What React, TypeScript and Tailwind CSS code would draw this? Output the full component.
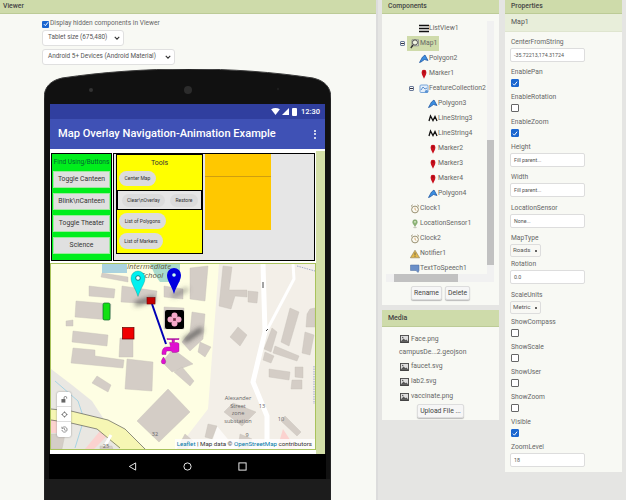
import type { ReactNode } from 'react'

type IconName = 'list' | 'map' | 'polygon' | 'marker' | 'feature' | 'line' | 'clock' | 'location' | 'notifier' | 'speech'

type TreeItem = { label: string; icon: IconName; depth: number; toggle?: boolean; selected?: boolean }

const tree: TreeItem[] = [
  { label: 'ListView1', icon: 'list', depth: 1 },
  { label: 'Map1', icon: 'map', depth: 0, toggle: true, selected: true },
  { label: 'Polygon2', icon: 'polygon', depth: 1 },
  { label: 'Marker1', icon: 'marker', depth: 1 },
  { label: 'FeatureCollection2', icon: 'feature', depth: 1, toggle: true },
  { label: 'Polygon3', icon: 'polygon', depth: 2 },
  { label: 'LineString3', icon: 'line', depth: 2 },
  { label: 'LineString4', icon: 'line', depth: 2 },
  { label: 'Marker2', icon: 'marker', depth: 2 },
  { label: 'Marker3', icon: 'marker', depth: 2 },
  { label: 'Marker4', icon: 'marker', depth: 2 },
  { label: 'Polygon4', icon: 'polygon', depth: 2 },
  { label: 'Clock1', icon: 'clock', depth: 0 },
  { label: 'LocationSensor1', icon: 'location', depth: 0 },
  { label: 'Clock2', icon: 'clock', depth: 0 },
  { label: 'Notifier1', icon: 'notifier', depth: 0 },
  { label: 'TextToSpeech1', icon: 'speech', depth: 0 },
]

const depthPad: Record<number, string> = { 0: 'pl-[28px]', 1: 'pl-[37px]', 2: 'pl-[46px]' }

const buildings = [
  '102,274 128,278 128,283 101,278', '89,287 115,290 114,299 89,297', '122,287 157,292 155,305 121,303',
  '76,302 111,305 110,321 75,318', '66,322 73,321 73,327 66,327', '73,332 108,336 107,347 72,343',
  '73,349 95,351 95,357 124,361 123,369 71,364', '120,339 133,339 133,358 119,358', '127,360 153,363 152,392 125,390',
  '97,377 111,386 108,393 92,384', '168,390 190,413 159,443 137,422', '190,269 208,267 205,302 190,300',
  '164,287 183,290 183,300 164,298', '173,350 193,365 172,373 162,363', '182,368 194,382 190,387 174,373',
  '200,343 211,348 205,358 198,353', '192,313 205,315 203,340 190,352 182,343 190,333', '164,308 184,309 184,330 164,330',
  '223,267 232,268 229,291 247,291 247,298 235,297 231,310 219,307', '248,292 258,293 257,304 248,303',
  '238,328 247,336 240,347 230,338', '290,309 299,313 289,347 281,343', '272,329 277,333 271,353 264,350',
  '305,333 314,336 310,356 302,354', '275,347 299,357 297,362 273,354', '265,353 274,357 271,364 263,361',
  '269,370 290,373 289,381 269,378', '295,368 303,368 303,379 295,378', '292,381 302,381 302,390 291,390',
  '310,310 315,309 315,328 306,328 307,315', '233,404 256,413 242,427 224,413', '285,417 301,433 297,437 281,422',
  '208,425 217,427 212,440 205,438', '185,435 193,442 187,450 177,450', '240,435 252,440 248,450 238,450',
  '51,435 65,435 62,450 51,450', '100,447 112,447 113,450 100,450',
]

function TreeIcon({ name }: { name: IconName }) {
  if (name === 'list') {
    return (
      <svg viewBox="0 0 10 10" className="w-[10px] h-[10px]">
        <path d="M0 1.500h10M0 4.500h10M0 7.500h10" stroke="#111" strokeWidth="1.500" />
      </svg>
    )
  }
  if (name === 'map') {
    return (
      <svg viewBox="0 0 10 10" className="w-[10px] h-[10px]">
        <path d="M2 .8l6.500 0 0 6-6.500 0z" fill="#e8eedc" stroke="#667" strokeWidth=".6" />
        <circle cx="5" cy="3.500" r="2.600" fill="#eef3df" stroke="#444" strokeWidth=".9" />
        <path d="M3 6L.8 9" stroke="#333" strokeWidth="1.300" />
      </svg>
    )
  }
  if (name === 'polygon') {
    return (
      <svg viewBox="0 0 10 10" className="w-[10px] h-[10px]">
        <path d="M.5 8.500L3.500 3 6 1 9 6.500 5.500 5.500 2 8z" fill="#3c8fe0" stroke="#1a4f9c" strokeWidth=".7" />
      </svg>
    )
  }
  if (name === 'marker') {
    return (
      <svg viewBox="0 0 10 10" className="w-[10px] h-[10px]">
        <path d="M5 9.800C4 7 2.600 5.600 2.600 3.200a2.400 2.400 0 0 1 4.800 0C7.400 5.600 6 7 5 9.800z" fill="#c8101c" />
        <circle cx="5" cy="3" r=".7" fill="#7a0a10" />
      </svg>
    )
  }
  if (name === 'feature') {
    return (
      <svg viewBox="0 0 10 10" className="w-[10px] h-[10px]">
        <rect x="1" y="1" width="8" height="7.500" rx="1" fill="#e3eefa" stroke="#5a93d2" strokeWidth=".8" />
        <path d="M2 6L4 3l2 2 2-1" fill="none" stroke="#3c78c0" strokeWidth=".8" />
        <circle cx="7.500" cy="7.500" r="1.600" fill="#5a93d2" />
      </svg>
    )
  }
  if (name === 'line') {
    return (
      <svg viewBox="0 0 10 10" className="w-[10px] h-[10px]">
        <path d="M1 7L2.500 2 5 6.500 7 2.500 9 7" fill="none" stroke="#111" strokeWidth="1.300" />
      </svg>
    )
  }
  if (name === 'clock') {
    return (
      <svg viewBox="0 0 10 10" className="w-[10px] h-[10px]">
        <circle cx="5" cy="5.500" r="3.400" fill="#fbfbf4" stroke="#8f8462" strokeWidth=".9" />
        <path d="M5 3.700v2l1.300.6" fill="none" stroke="#c87f2a" strokeWidth=".6" />
        <path d="M1 2.400L2.600.9M9 2.400L7.400.9" stroke="#8f8462" strokeWidth="1" />
      </svg>
    )
  }
  if (name === 'location') {
    return (
      <svg viewBox="0 0 10 10" className="w-[10px] h-[10px]">
        <path d="M5 7.500C4.200 5.500 2.700 4.800 2.700 3a2.300 2.300 0 0 1 4.600 0C7.300 4.800 5.800 5.500 5 7.500z" fill="#8fb878" stroke="#6b8f5a" strokeWidth=".5" />
        <circle cx="5" cy="2.900" r=".8" fill="#e8f0de" />
        <ellipse cx="5" cy="8.600" rx="2" ry=".7" fill="#c4c4b8" />
      </svg>
    )
  }
  if (name === 'notifier') {
    return (
      <svg viewBox="0 0 10 10" className="w-[10px] h-[10px]">
        <path d="M5 1.200L9.600 8.800H.4z" fill="#e2b84c" stroke="#8a7a55" strokeWidth=".6" />
        <path d="M5 3.600v2.800M5 7v.8" stroke="#554" strokeWidth=".8" />
      </svg>
    )
  }
  return (
    <svg viewBox="0 0 10 10" className="w-[10px] h-[10px]">
      <path d="M.5 1h8.500v5.500H9L8 8.500 6 6.500H.5z" fill="#6a8fc8" stroke="#4a6a9c" strokeWidth=".5" />
    </svg>
  )
}

function ImageIcon() {
  return (
    <svg viewBox="0 0 10 9" className="w-[9px] h-[8px] shrink-0">
      <rect width="10" height="9" fill="#444" />
      <rect x="1" y="1" width="8" height="6" fill="#ddd" />
      <path d="M1 7l3-3 2 2 1-1 2 2z" fill="#555" />
      <circle cx="3" cy="2.800" r=".8" fill="#555" />
    </svg>
  )
}

function PanelHeader({ children }: { children: ReactNode }) {
  return (
    <div className="h-[14px] bg-[#cedbaa] border-b border-[#bccb96] pl-[6px] text-[6.8px] leading-[12px] font-medium text-[#444]">
      {children}
    </div>
  )
}

function Label({ children }: { children: ReactNode }) {
  return <div className="text-[6.7px] leading-[9px] text-[#666]">{children}</div>
}

function TextBox({ value, mb }: { value: string; mb: string }) {
  return (
    <div className={`w-[75px] h-[14px] -ml-px mt-[1px] bg-white border border-[#ddd] rounded-[2px] pl-[3px] text-[5.3px] leading-[12px] text-[#555] ${mb}`}>
      {value}
    </div>
  )
}

function Check({ on }: { on?: boolean }) {
  return (
    <div className={`w-[8px] h-[8px] mt-[2px] mb-[6px] rounded-[1px] flex items-center justify-center border ${on ? 'bg-[#1a66d0] border-[#1a66d0]' : 'bg-white border-[#666]'}`}>
      {on && (
        <svg viewBox="0 0 8 8" className="w-[7px] h-[7px]">
          <path d="M1.200 4.200l2 2L6.800 1.600" fill="none" stroke="#fff" strokeWidth="1.300" />
        </svg>
      )}
    </div>
  )
}

function SelectBox({ value, mb }: { value: string; mb: string }) {
  return (
    <div className={`w-[31px] h-[13px] -ml-px mt-[1px] bg-[#f8f8f4] border border-[#ddd] rounded-[2px] pl-[2px] pr-[3px] flex items-center justify-between text-[6.2px] text-[#555] ${mb}`}>
      {value}
      <span className="w-[2px] h-[2px] bg-[#333] rounded-full" />
    </div>
  )
}

function GreenButton({ children }: { children: ReactNode }) {
  return (
    <div className="h-[17px] mb-[5px] bg-[#e0e0e0] border border-[#9dea9d] text-[6.8px] leading-[15px] text-center text-[#333]">
      {children}
    </div>
  )
}

function Oval({ children, className }: { children: ReactNode; className: string }) {
  return (
    <div className={`rounded-full bg-[#dcdcdc] text-[5px] text-center text-[#333] ${className}`}>{children}</div>
  )
}

function ChevronMark() {
  return (
    <svg viewBox="0 0 8 8" className="w-[6px] h-[6px]">
      <path d="M1 2.500l3 3 3-3" fill="none" stroke="#333" strokeWidth="1.500" />
    </svg>
  )
}

function MapArt() {
  return (
    <svg viewBox="51 265 264 185" className="w-[264px] h-[185px] block">
      <defs>
        <filter id="soft" x="-50%" y="-50%" width="200%" height="200%">
          <feGaussianBlur stdDeviation="2.600" />
        </filter>
      </defs>
      <rect x="51" y="265" width="264" height="185" fill="#fefee3" />
      <path d="M219 265H315V450H177L208 410Z" fill="#f3efe8" />
      <path d="M51 370L72 386 92 402 105 422 146 450H51Z" fill="#e9e7e2" />
      <path d="M51 421h6v13h-6z" fill="#fbd2cf" />
      <path d="M85 450L100 432 108 436 94 450Z" fill="#fbd2cf" />
      <path d="M55 382L78 402 84 420 75 449" fill="none" stroke="#a8d4e4" strokeWidth="1" />
      <path d="M51 410L71 412 108 421 125 430 145 450H120L97 430 71 424 51 421Z" fill="#f6f6b4" />
      <path d="M51 410L71 412 108 421 125 430 145 450M51 421L71 424 97 430 120 449" fill="none" stroke="#444" strokeWidth=".6" />
      <path d="M103 450L111 436" stroke="#fff" strokeWidth="3" />
      <rect x="102" y="265" width="25" height="9" fill="#aad3df" />
      <path d="M150 265H180V283H160L155 276Z" fill="#a9dbcc" />
      <path d="M217 427L236 450H210Z" fill="#fff" opacity=".7" />
      <path d="M277 450L283 430 296 450Z" fill="#fbd2cf" />
      {buildings.map((points) => (
        <polygon key={points} points={points} fill="#d4cdc6" stroke="#c6bfb8" strokeWidth=".4" />
      ))}
      <path d="M263 265L265 333 253 383 267 417 267 450" fill="none" stroke="#fff" strokeWidth="5" />
      <path d="M293 265L294 280 266 333" fill="none" stroke="#fff" strokeWidth="3" />
      <path d="M297 267L315 272" fill="none" stroke="#7a88c0" strokeWidth=".7" strokeDasharray="1.500 1" />
      <path d="M314 367V405" fill="none" stroke="#7a88c0" strokeWidth=".7" strokeDasharray="1.500 1" />
      <path d="M263 283v6M266 332l2-2" stroke="#333" strokeWidth=".9" />
      <g filter="url(#soft)">
        <path d="M135 305L155 299" stroke="#555" strokeWidth="5" opacity=".75" />
        <path d="M172 297L188 290" stroke="#555" strokeWidth="4" opacity=".55" />
        <path d="M184 342L202 330" stroke="#444" strokeWidth="5" opacity=".8" />
      </g>
      <g fontFamily="'Open Sans', sans-serif" fill="#5f5940">
        <text x="149" y="269.500" textAnchor="middle" fontSize="7.800" fontStyle="italic">Intermediate</text>
        <text x="152" y="279" textAnchor="middle" fontSize="7.800" fontStyle="italic">School</text>
        <g fontSize="5.600" fill="#666" textAnchor="middle">
          <text x="238" y="401">Alexander</text>
          <text x="238" y="408.500">Street</text>
          <text x="238" y="416">zone</text>
          <text x="238" y="423.500">substation</text>
          <text x="262" y="409">13</text>
          <text x="281" y="422">10</text>
          <text x="155" y="437">32</text>
          <text x="106" y="449">25</text>
          <text x="247" y="438">9</text>
        </g>
      </g>
      <path d="M152 305L166 345" stroke="#0000b4" strokeWidth="2" />
      <rect x="147" y="298.500" width="8" height="6.500" fill="#c40000" stroke="#700" strokeWidth=".6" />
      <path d="M138 297.500C135 288 131 285 131 279a7 7 0 0 1 14 0C145 285 141 288 138 297.500Z" fill="#00f0f0" stroke="#076" strokeWidth=".3" />
      <circle cx="138" cy="279" r="2.300" fill="#fff" stroke="#066" strokeWidth=".8" />
      <path d="M174 295C171 285 167 282 167 276a7 7 0 0 1 14 0C181 282 177 285 174 295Z" fill="#0000e0" />
      <circle cx="174" cy="276" r="1.800" fill="#cfe" />
      <rect x="165" y="311" width="19" height="19" rx="2" fill="#000" />
      <g fill="#f4a8c8">
        <circle cx="174.500" cy="316.500" r="3" />
        <circle cx="174.500" cy="324.500" r="3" />
        <circle cx="170.500" cy="320.500" r="3" />
        <circle cx="178.500" cy="320.500" r="3" />
      </g>
      <path d="M173 320.500h3M174.500 319v3" stroke="#a35" strokeWidth=".5" />
      <rect x="103" y="304" width="7" height="17" rx="1.500" fill="#12e012" stroke="#0a6a2a" strokeWidth=".7" />
      <rect x="122.500" y="328.500" width="11.500" height="11.500" fill="#f00000" stroke="#600" strokeWidth=".7" />
      <g fill="#e010d0" stroke="#80107a" strokeWidth=".35">
        <rect x="167" y="339.500" width="12" height="1.300" />
        <rect x="172" y="340.500" width="2.500" height="3" />
        <path d="M169.500 343.500h7.500l2 1v8l-3 1h-3.500l-1-1.500h-4c-1.200 0-1.500 1-1.500 3.500h-4c-.3-4 1-7.500 5-7.500h3.500z" />
        <path d="M163.500 358c-1.500 2.500-2.200 3.500-2.200 4.700a2.200 2.200 0 0 0 4.400 0c0-1.200-.7-2.200-2.200-4.700z" />
      </g>
    </svg>
  )
}

export default function App() {
  return (
    <div className="w-[626px] h-[500px] overflow-hidden flex bg-[#e5e5e3] font-['Roboto',sans-serif]">
      <div className="w-[378px] h-[500px] shrink-0 bg-[#f8f9f4] border-r-2 border-[#dcdcdc]">
        <PanelHeader>
          <span className="-ml-[3px]">Viewer</span>
        </PanelHeader>
        <div className="pl-[42px] pt-[6px]">
          <div className="flex items-center h-[8px] text-[6.6px] text-[#666]">
            <span className="w-[7px] h-[7px] bg-[#1a66d0] rounded-[1px] flex items-center justify-center mr-px">
              <svg viewBox="0 0 8 8" className="w-[6px] h-[6px]">
                <path d="M1.200 4.200l2 2L6.800 1.600" fill="none" stroke="#fff" strokeWidth="1.300" />
              </svg>
            </span>
            Display hidden components in Viewer
          </div>
          <div className="mt-[2px] w-[82px] h-[16px] bg-white border border-[#e0e0e0] rounded-[3px] flex items-center justify-between pl-[5px] pr-[3px] text-[6.4px] text-[#555]">
            Tablet size (675,480)
            <ChevronMark />
          </div>
          <div className="mt-[3px] w-[133px] h-[16px] bg-white border border-[#e0e0e0] rounded-[3px] flex items-center justify-between pl-[5px] pr-[3px] text-[6.4px] text-[#555]">
            Android 5+ Devices (Android Material)
            <ChevronMark />
          </div>
        </div>
        <div className="relative ml-[44px] mt-[4px] w-[287px] h-[440px] pl-[6px] pt-[35px]">
          <svg viewBox="0 0 287 440" className="absolute inset-0 w-[287px] h-[440px]">
            <path d="M0 440V30C0 18 6 12 18 9 100 -3 190 -3 269 9 281 12 287 18 287 30V440Z" fill="#111" stroke="#3a3a3a" strokeWidth="1" />
            <rect x="-3" y="85" width="3" height="70" fill="#2a2a2a" />
            <rect x="287" y="55" width="2" height="30" fill="#2a2a2a" />
            <rect x="1" y="410" width="285" height="30" fill="#1c1c1c" />
            <circle cx="47" cy="21" r="2" fill="#333" />
            <circle cx="144" cy="21" r="4" fill="#2c2c2c" />
            <circle cx="234" cy="20" r="1.200" fill="#1e1e1e" />
          </svg>
          <div className="relative w-[275px]">
            <div className="h-[15px] bg-[#303f9f] flex items-center justify-end pr-[5px] gap-[2px]">
              <svg viewBox="0 0 10 8" className="w-[9px] h-[7px]">
                <path d="M0 1.500Q5 -1.500 10 1.500L5 8Z" fill="#fff" />
              </svg>
              <svg viewBox="0 0 8 8" className="w-[7px] h-[7px]">
                <path d="M0 8L8 0V8Z" fill="#fff" />
              </svg>
              <span className="w-[5px] h-[8px] ml-px bg-white rounded-[1px]" />
              <span className="ml-[2px] text-[7.500px] font-medium text-white">12:30</span>
            </div>
            <div className="h-[30px] bg-[#3f51b5] flex items-center justify-between pl-[8px] pr-[9px]">
              <span className="text-[11.100px] font-medium text-white">Map Overlay Navigation-Animation Example</span>
              <span className="flex flex-col gap-[1.500px]">
                <span className="w-[2px] h-[2px] bg-white rounded-full" />
                <span className="w-[2px] h-[2px] bg-white rounded-full" />
                <span className="w-[2px] h-[2px] bg-white rounded-full" />
              </span>
            </div>
            <div className="h-[305px] bg-white flex pt-[2px]">
              <div className="w-[266px] shrink-0">
                <div className="h-[110px] pt-[2px] pl-[1px] flex gap-px">
                  <div className="w-[61px] h-[108px] border border-black bg-[#00ee1c] px-[1px]">
                    <div className="h-[17px] text-[6.500px] leading-[16px] text-center text-[#063] whitespace-nowrap">Find Using/Buttons</div>
                    <GreenButton>Toggle Canteen</GreenButton>
                    <GreenButton>Blink\nCanteen</GreenButton>
                    <GreenButton>Toggle Theater</GreenButton>
                    <GreenButton>Science</GreenButton>
                  </div>
                  <div className="w-[202px] h-[108px] border border-black bg-[#e6e6e6] flex pl-[2px] gap-[2px]">
                    <div className="w-[87px] h-[100px] border border-black bg-[#ffff00]">
                      <div className="h-[35px]">
                        <div className="h-[16px] text-[7px] leading-[17px] text-center text-[#333]">Tools</div>
                        <Oval className="w-[37px] h-[15px] ml-[2px] leading-[15px]">Center Map</Oval>
                      </div>
                      <div className="h-[20px] border border-black bg-[#e6e6e6] flex items-center pl-[4px] gap-[5px]">
                        <Oval className="w-[43px] h-[13px] leading-[13px]">Clear\nOverlay</Oval>
                        <Oval className="w-[28px] h-[13px] leading-[13px]">Restore</Oval>
                      </div>
                      <div className="pt-[3px] pl-[2px]">
                        <Oval className="w-[47px] h-[16px] leading-[16px] mb-[4px]">List of Polygons</Oval>
                        <Oval className="w-[44px] h-[16px] leading-[16px]">List of Markers</Oval>
                      </div>
                    </div>
                    <div className="w-[66px] h-[76px] bg-[#ffc800] border-t-0">
                      <div className="h-[23px] border-b border-[#cf9f10]" />
                    </div>
                  </div>
                </div>
                <div className="relative mt-[2px] w-[266px] h-[187px] border border-[#a9c25c]">
                  <MapArt />
                  <div className="absolute left-[6px] top-[128px] w-[14px] h-[45px] rounded-[2px] bg-white flex flex-col shadow-[0_0_2px_#888]">
                    <div className="h-[15px] flex items-center justify-center border-b border-[#ddd]">
                      <svg viewBox="0 0 8 8" className="w-[7px] h-[7px]">
                        <rect x="0.500" y="3.500" width="4.500" height="4" fill="#666" />
                        <path d="M3.500 3.500V2a1.500 1.500 0 0 1 3 0v1" fill="none" stroke="#666" strokeWidth=".9" />
                      </svg>
                    </div>
                    <div className="h-[15px] flex items-center justify-center border-b border-[#ddd]">
                      <svg viewBox="0 0 8 8" className="w-[7px] h-[7px]">
                        <circle cx="4" cy="4" r="2.300" fill="none" stroke="#666" strokeWidth=".8" />
                        <path d="M4 .3v2M4 5.700v2M.3 4h2M5.700 4h2" stroke="#666" strokeWidth=".7" />
                      </svg>
                    </div>
                    <div className="h-[15px] flex items-center justify-center">
                      <svg viewBox="0 0 8 8" className="w-[7px] h-[7px]">
                        <path d="M1.500 2.300A3 3 0 1 1 1 4.500" fill="none" stroke="#666" strokeWidth=".8" />
                        <path d="M1 .8v2h2M4 2.500V4.500l1.500.5" fill="none" stroke="#666" strokeWidth=".7" />
                      </svg>
                    </div>
                  </div>
                  <div className="absolute right-0 bottom-0 h-[10px] pl-[2px] pr-[3px] bg-[#ffffffcc] text-[6.200px] leading-[10px] text-[#333] whitespace-nowrap">
                    <span className="text-[#0078a8]">Leaflet</span> | Map data © <span className="text-[#0078a8]">OpenStreetMap</span> contributors
                  </div>
                </div>
              </div>
              <div className="flex-1 bg-[#d3dfa8]" />
            </div>
          </div>
          <div className="relative -ml-px w-[277px] h-[25px] bg-black flex items-center justify-center gap-[46px]">
            <svg viewBox="0 0 10 10" className="w-[9px] h-[9px]">
              <path d="M8.500 1L1.500 5l7 4z" fill="none" stroke="#fff" strokeWidth="1" />
            </svg>
            <svg viewBox="0 0 10 10" className="w-[9px] h-[9px]">
              <circle cx="5" cy="5" r="4" fill="none" stroke="#fff" strokeWidth="1" />
            </svg>
            <svg viewBox="0 0 10 10" className="w-[9px] h-[9px]">
              <rect x="1" y="1" width="8" height="8" fill="none" stroke="#fff" strokeWidth="1" />
            </svg>
          </div>
        </div>
      </div>

      <div className="w-[117px] ml-[4px] shrink-0">
        <div className="h-[305px] bg-[#f8f9f4]">
          <PanelHeader>Components</PanelHeader>
          <div className="relative h-[291px] pt-[7px]">
            {tree.map((item) => (
              <div key={item.label} className={`relative h-[15px] flex items-center ${depthPad[item.depth]}`}>
                {item.toggle && (
                  <span className="w-[5px] h-[5px] -ml-[10px] mr-[5px] border border-[#6a7a9a] rounded-[1px] flex items-center justify-center">
                    <span className="w-[3px] h-px bg-[#334]" />
                  </span>
                )}
                <div className={`flex items-center h-[15px] ${item.selected ? 'bg-[#cfdbaa] -ml-[3px] pl-[3px] pr-[2px]' : ''}`}>
                  <TreeIcon name={item.icon} />
                  <span className="text-[6.800px] text-[#666] whitespace-nowrap">{item.label}</span>
                </div>
              </div>
            ))}
            <div className="absolute left-[105px] top-[7px] w-[7px] h-[253px] bg-[#f1f1f1]">
              <div className="mt-[119px] h-[125px] bg-[#c1c1c1]" />
            </div>
            <div className="absolute left-[4px] top-[260px] w-[108px] h-[8px] bg-[#f1f1f1] pl-[8px]">
              <div className="w-[64px] h-[8px] bg-[#c1c1c1]" />
            </div>
            <div className="absolute left-[29px] top-[272px] flex gap-[3px]">
              <div className="w-[31px] h-[14px] bg-[#f6f6f6] border border-[#ddd] rounded-[2px] text-[6.800px] leading-[12px] text-center text-[#444] shadow-[0_1px_1px_#bbb]">Rename</div>
              <div className="w-[25px] h-[14px] bg-[#f6f6f6] border border-[#ddd] rounded-[2px] text-[6.800px] leading-[12px] text-center text-[#444] shadow-[0_1px_1px_#bbb]">Delete</div>
            </div>
          </div>
        </div>
        <div className="mt-[5px] h-[110px] bg-[#f8f9f4]">
          <div className="h-[17px] bg-[#cedbaa] border-b border-[#bccb96] pl-[6px] text-[7px] leading-[16px] font-medium text-[#444]">Media</div>
          <div className="pl-[18px] pt-[5px] text-[6.800px] text-[#666]">
            <div className="h-[14px] flex items-center gap-[2px]"><ImageIcon />Face.png</div>
            <div className="h-[13px] flex items-center -ml-[1px]">campusDe...2.geojson</div>
            <div className="h-[15px] flex items-center gap-[2px]"><ImageIcon />faucet.svg</div>
            <div className="h-[15px] flex items-center gap-[2px]"><ImageIcon />lab2.svg</div>
            <div className="h-[15px] flex items-center gap-[2px]"><ImageIcon />vaccinate.png</div>
            <div className="ml-[17px] w-[47px] h-[14px] bg-[#f6f6f6] border border-[#ddd] rounded-[2px] text-[6.800px] leading-[12px] text-center text-[#444] shadow-[0_1px_1px_#bbb]">Upload File ...</div>
          </div>
        </div>
      </div>

      <div className="w-[117px] h-[472px] ml-[6px] shrink-0 bg-[#f8f9f4]">
        <PanelHeader>Properties</PanelHeader>
        <div className="h-[18px] bg-[#e8eeda] border-b border-[#dfe5cf] pl-[6px] text-[7px] leading-[17px] text-[#555]">Map1</div>
        <div className="pl-[6px] pt-[6px]">
          <Label>CenterFromString</Label>
          <TextBox value="-35.72213,174.31724" mb="mb-[6px]" />
          <Label>EnablePan</Label>
          <Check on />
          <Label>EnableRotation</Label>
          <Check />
          <Label>EnableZoom</Label>
          <Check on />
          <Label>Height</Label>
          <TextBox value="Fill parent..." mb="mb-[6px]" />
          <Label>Width</Label>
          <TextBox value="Fill parent..." mb="mb-[7px]" />
          <Label>LocationSensor</Label>
          <TextBox value="None..." mb="mb-[6px]" />
          <Label>MapType</Label>
          <SelectBox value="Roads" mb="mb-[3px]" />
          <Label>Rotation</Label>
          <TextBox value="0.0" mb="mb-[7px]" />
          <Label>ScaleUnits</Label>
          <SelectBox value="Metric" mb="mb-[4px]" />
          <Label>ShowCompass</Label>
          <Check />
          <Label>ShowScale</Label>
          <Check />
          <Label>ShowUser</Label>
          <Check />
          <Label>ShowZoom</Label>
          <Check />
          <Label>Visible</Label>
          <Check on />
          <Label>ZoomLevel</Label>
          <TextBox value="18" mb="mb-0" />
        </div>
      </div>
    </div>
  )
}
